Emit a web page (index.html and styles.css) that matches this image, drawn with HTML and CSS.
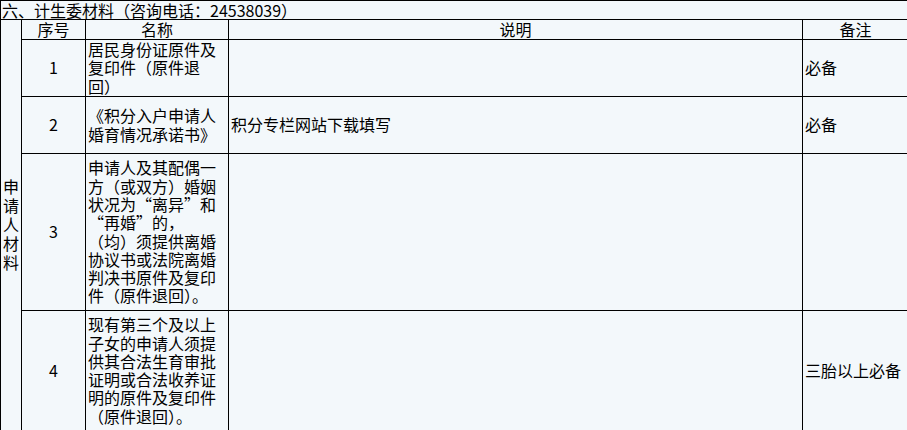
FILE: index.html
```
<!DOCTYPE html>
<html lang="zh-CN">
<head>
<meta charset="utf-8">
<link rel="stylesheet" href="styles.css">
</head>
<body>
<table class="sheet">
  <colgroup>
    <col class="c-side">
    <col class="c-no">
    <col class="c-name">
    <col class="c-desc">
    <col class="c-note">
  </colgroup>
  <tr class="r-title">
    <td colspan="5" class="title">六、计生委材料（咨询电话：24538039）</td>
  </tr>
  <tr class="r-head">
    <td rowspan="5" class="side">申<br>请<br>人<br>材<br>料</td>
    <td class="center">序号</td>
    <td class="center">名称</td>
    <td class="center">说明</td>
    <td class="center">备注</td>
  </tr>
  <tr class="r-1">
    <td class="center">1</td>
    <td class="text">居民身份证原件及<br>复印件（原件退<br>回）</td>
    <td class="text"></td>
    <td class="text">必备</td>
  </tr>
  <tr class="r-2">
    <td class="center">2</td>
    <td class="text">《积分入户申请人<br>婚育情况承诺书》</td>
    <td class="text">积分专栏网站下载填写</td>
    <td class="text">必备</td>
  </tr>
  <tr class="r-3">
    <td class="center">3</td>
    <td class="text">申请人及其配偶一<br>方（或双方）婚姻<br>状况为“离异”和<br>“再婚”的，<br>（均）须提供离婚<br>协议书或法院离婚<br>判决书原件及复印<br>件（原件退回）。</td>
    <td class="text"></td>
    <td class="text"></td>
  </tr>
  <tr class="r-4">
    <td class="center">4</td>
    <td class="text">现有第三个及以上<br>子女的申请人须提<br>供其合法生育审批<br>证明或合法收养证<br>明的原件及复印件<br>（原件退回）。</td>
    <td class="text"></td>
    <td class="text">三胎以上必备</td>
  </tr>
</table>
</body>
</html>
```

FILE: styles.css
```
html, body {
  margin: 0;
  padding: 0;
  background: #f3f8fb;
  overflow: hidden;
}

.sheet {
  border-collapse: collapse;
  table-layout: fixed;
  width: 908px;
  font-family: "Noto Sans CJK SC", "Liberation Sans", sans-serif;
  font-size: 16px;
  line-height: 18.3px;
  color: #000;
}

.c-side { width: 21px; }
.c-no { width: 64px; }
.c-name { width: 143px; }
.c-desc { width: 574px; }
.c-note { width: 106px; }

.sheet td {
  border: 1px solid #000;
  padding: 0 2px;
  vertical-align: middle;
  white-space: nowrap;
}

.sheet .title {
  padding: 0 1px;
  text-align: left;
}

.r-title { height: 19px; }
.r-head { height: 19px; }
.r-1 { height: 57px; }
.r-2 { height: 57px; }
.r-3 { height: 157px; }
.r-4 { height: 120px; }

.sheet .side {
  text-align: center;
  padding: 0;
  line-height: 19px;
}

.sheet .center {
  text-align: center;
}

.sheet .text {
  text-align: left;
}
```
